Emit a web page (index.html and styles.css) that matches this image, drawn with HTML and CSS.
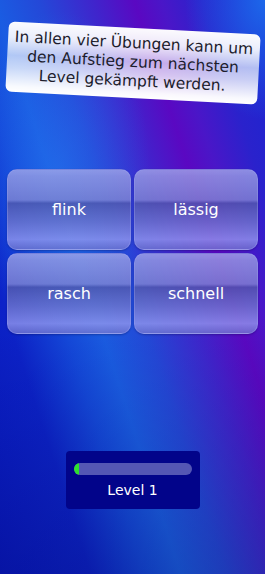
FILE: index.html
```html
<!DOCTYPE html>
<html lang="de">
<head>
    <meta charset="UTF-8">
    <meta name="viewport" content="width=device-width, initial-scale=1.0">
    <title>Übungen</title>
    <link rel="stylesheet" href="styles.css">
</head>
<body>
    <div class="screen">
        <div class="note">
            In allen vier Übungen kann um<br>
            den Aufstieg zum nächsten<br>
            Level gekämpft werden.
        </div>
        <div class="answers">
            <button class="answer">flink</button>
            <button class="answer">lässig</button>
            <button class="answer">rasch</button>
            <button class="answer">schnell</button>
        </div>
        <div class="level">
            <div class="bar"><div class="bar-fill" style="width: 5%"></div></div>
            <div class="level-label">Level 1</div>
        </div>
    </div>
</body>
</html>
```

FILE: styles.css
```css
body {
    margin: 0;
    padding: 0;
    font-family: "DejaVu Sans", Verdana, sans-serif;
}
.screen {
    width: 265px;
    height: 574px;
    overflow: hidden;
    display: flex;
    flex-direction: column;
    background:
        radial-gradient(ellipse 80px 120px at 265px 0, rgba(30, 120, 240, 0.8), rgba(30, 120, 240, 0)),
        radial-gradient(ellipse 90px 160px at 60px 170px, rgba(40, 120, 240, 0.45), rgba(40, 120, 240, 0)),
        linear-gradient(to bottom, rgba(0, 0, 40, 0) 55%, rgba(0, 0, 40, 0.18) 100%),
        linear-gradient(72deg, #0818c0 0%, #0c22c8 20%, #1448da 32%, #1a5ce2 40%, #2448d8 50%, #4024cc 62%, #5a08c2 71%, #4a16c8 77%, #2a22cc 86%, #1826d2 100%);
}
.note {
    width: 252px;
    height: 70px;
    margin: 28px 0 0 7px;
    box-sizing: border-box;
    padding-top: 6px;
    border-radius: 6px;
    transform: rotate(3deg);
    background: linear-gradient(to bottom, rgba(255, 255, 255, 0.98) 0%, rgba(255, 255, 255, 0.9) 22%, rgba(255, 255, 255, 0.66) 48%, rgba(255, 255, 255, 0.76) 66%, rgba(255, 255, 255, 0.97) 92%, #fff 100%);
    color: #1c1c2c;
    font-size: 15.5px;
    line-height: 19px;
    text-align: center;
}
.answers {
    display: grid;
    grid-template-columns: 124px 124px;
    grid-auto-rows: 81px;
    gap: 3px;
    margin-top: 71px;
    padding: 0 7px;
}
.answer {
    border: 1px solid rgba(160, 165, 240, 0.35);
    border-radius: 10px;
    color: #fff;
    font-family: "DejaVu Sans", Verdana, sans-serif;
    font-size: 16px;
    padding: 0;
    background: linear-gradient(to bottom, rgba(162, 166, 232, 0.82) 0%, rgba(152, 156, 226, 0.8) 8%, rgba(130, 134, 210, 0.8) 38%, rgba(84, 90, 172, 0.8) 42%, rgba(96, 102, 186, 0.8) 52%, rgba(112, 118, 204, 0.8) 66%, rgba(146, 150, 236, 0.8) 88%, rgba(114, 118, 206, 0.8) 100%);
    box-shadow: 0 1px 2px rgba(0, 0, 60, 0.3);
}
.level {
    width: 134px;
    height: 58px;
    margin: 117px auto 0;
    box-sizing: border-box;
    padding: 12px 8px 0;
    background-color: #02048a;
    border-radius: 4px;
}
.bar {
    height: 12px;
    border-radius: 6px;
    background-color: #5456b4;
    overflow: hidden;
}
.bar-fill {
    height: 100%;
    border-radius: 6px 0 0 6px;
    background-color: #2ee02e;
}
.level-label {
    margin-top: 7px;
    color: #fff;
    font-size: 14px;
    text-align: center;
}
```
